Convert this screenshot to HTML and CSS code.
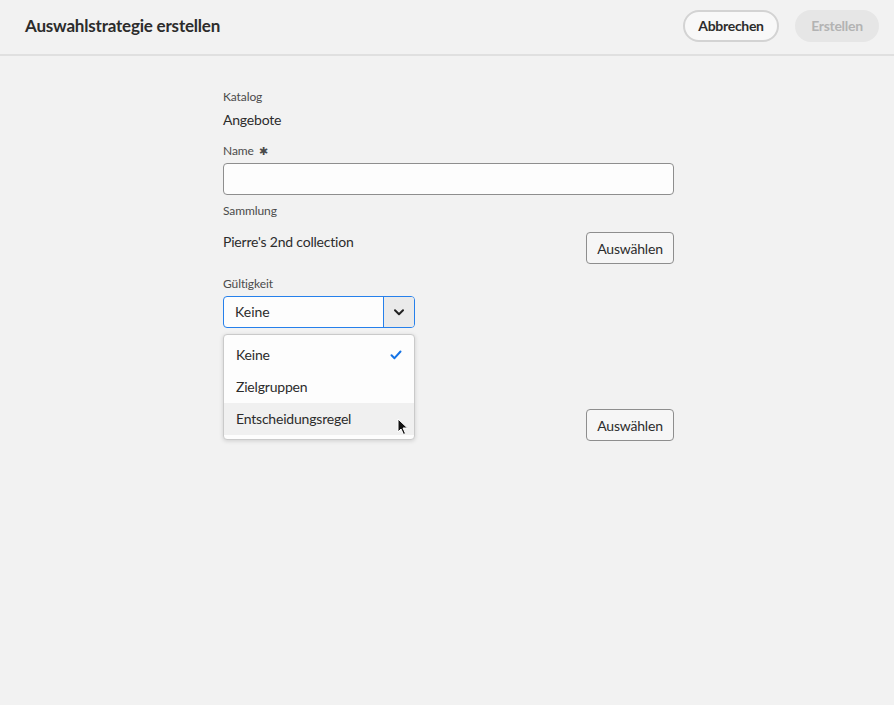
FILE: index.html
```html
<!DOCTYPE html>
<html lang="de">
<head>
<meta charset="utf-8">
<title>Auswahlstrategie erstellen</title>
<link rel="stylesheet" href="styles.css">
</head>
<body>
<header class="topbar">
  <h1 class="title">Auswahlstrategie erstellen</h1>
  <div class="actions">
    <button class="btn-pill btn-secondary">Abbrechen</button>
    <button class="btn-pill btn-disabled">Erstellen</button>
  </div>
</header>
<main class="content">
  <form class="form">
    <div class="field">
      <div class="label">Katalog</div>
      <div class="value">Angebote</div>
    </div>
    <div class="field field-name">
      <div class="label">Name <span class="req">✱</span></div>
      <input class="textfield" type="text">
    </div>
    <div class="field field-coll">
      <div class="label">Sammlung</div>
      <div class="row">
        <div class="value">Pierre's 2nd collection</div>
        <button type="button" class="btn-rect">Auswählen</button>
      </div>
    </div>
    <div class="field field-valid">
      <div class="label">Gültigkeit</div>
      <div class="picker-wrap">
        <div class="picker">
          <span class="picker-text">Keine</span>
          <span class="picker-btn">
            <svg width="10" height="7" viewBox="0 0 10 7"><path d="M1 1.2 L5 5.2 L9 1.2" fill="none" stroke="#222" stroke-width="2" stroke-linecap="round" stroke-linejoin="round"/></svg>
          </span>
        </div>
        <ul class="menu">
          <li class="menu-item">Keine
            <svg class="check" width="12" height="10" viewBox="0 0 12 10"><path d="M1.5 5.2 L4.5 8.2 L10.5 1.5" fill="none" stroke="#1473e6" stroke-width="2" stroke-linecap="round" stroke-linejoin="round"/></svg>
          </li>
          <li class="menu-item">Zielgruppen</li>
          <li class="menu-item hover">Entscheidungsregel
            <svg class="cursor" width="12" height="18" viewBox="0 0 12 18"><path d="M1 1 L1 14 L4 11 L6.5 16.5 L8.5 15.5 L6 10 L10.5 10 Z" fill="#111" stroke="#fff" stroke-width="1"/></svg>
          </li>
        </ul>
      </div>
    </div>
    <div class="field field-rule">
      <div class="row row-end">
        <button type="button" class="btn-rect">Auswählen</button>
      </div>
    </div>
  </form>
</main>
</body>
</html>
```

FILE: styles.css
```css
* { box-sizing: border-box; }
html, body {
  margin: 0;
  padding: 0;
  background: #f2f2f2;
  font-family: Lato, "Noto Sans", sans-serif;
  color: #2c2c2c;
}
body { width: 894px; height: 705px; overflow: hidden; }

.topbar {
  height: 56px;
  border-bottom: 2px solid #e0e0e0;
  display: flex;
  align-items: center;
  justify-content: space-between;
  padding: 0 15px 3px 25px;
}
.title {
  margin: 0;
  font-size: 17px;
  font-weight: 700;
  color: #2c2c2c;
  letter-spacing: -0.2px;
}
.actions { display: flex; gap: 16px; }
.btn-pill {
  height: 32px;
  border-radius: 16px;
  font-family: inherit;
  font-size: 14px;
  font-weight: 700;
  padding: 0 12px;
  letter-spacing: -0.3px;
}
.btn-secondary {
  width: 96px;
  background: #f8f8f8;
  border: 2px solid #d3d3d3;
  color: #2c2c2c;
}
.btn-disabled {
  width: 84px;
  background: #e6e6e6;
  border: 2px solid #e6e6e6;
  color: #b3b3b3;
}

.content { padding-left: 223px; padding-top: 33px; }
.form { width: 451px; display: flex; flex-direction: column; }
.field { display: flex; flex-direction: column; }
.label {
  font-size: 12px;
  color: #4b4b4b;
  line-height: 16px;
  height: 16px;
  letter-spacing: -0.1px;
}
.req { font-size: 11px; margin-left: 2px; }
.value {
  font-size: 14px;
  color: #2c2c2c;
  line-height: 18px;
  margin-top: 6px;
  letter-spacing: -0.2px;
}
.field-name { margin-top: 14px; }
.textfield {
  margin-top: 4px;
  height: 32px;
  width: 451px;
  border: 1px solid #8e8e8e;
  border-radius: 4px;
  background: #fdfdfd;
  font-family: inherit;
  font-size: 14px;
  padding: 0 10px;
}
.field-coll { margin-top: 8px; }
.row {
  display: flex;
  align-items: center;
  justify-content: space-between;
  margin-top: 13px;
}
.row .value { margin-top: 0; position: relative; top: -6px; }
.btn-rect {
  height: 32px;
  width: 88px;
  background: #f6f6f6;
  border: 1px solid #8e8e8e;
  border-radius: 4px;
  font-family: inherit;
  font-size: 14px;
  color: #2c2c2c;
  padding: 0;
  letter-spacing: -0.2px;
}
.field-valid { margin-top: 12px; }
.picker-wrap { position: relative; margin-top: 4px; width: 192px; }
.picker {
  height: 32px;
  width: 192px;
  border: 1px solid #2680eb;
  border-radius: 4px;
  display: flex;
  background: #fdfdfd;
  overflow: hidden;
}
.picker-text {
  flex: 1;
  font-size: 14px;
  line-height: 30px;
  padding-left: 11px;
  color: #2c2c2c;
}
.picker-btn {
  width: 31px;
  border-left: 1px solid #2680eb;
  background: #eaeaea;
  display: flex;
  align-items: center;
  justify-content: center;
}
.menu {
  position: absolute;
  top: 38px;
  left: 0;
  width: 192px;
  margin: 0;
  padding: 4px 0;
  list-style: none;
  background: #fdfdfd;
  border: 1px solid #cacaca;
  border-radius: 4px;
  box-shadow: 0 1px 4px rgba(0,0,0,0.15);
  z-index: 2;
}
.menu-item {
  height: 32px;
  line-height: 32px;
  padding-left: 12px;
  font-size: 14px;
  color: #2c2c2c;
  position: relative;
  letter-spacing: -0.2px;
}
.menu-item.hover { background: #f0f0f0; }
.check { position: absolute; right: 12px; top: 11px; }
.cursor { position: absolute; left: 173px; top: 15px; }
.field-rule { margin-top: 81px; }
.row-end { justify-content: flex-end; margin-top: 0; }
```
